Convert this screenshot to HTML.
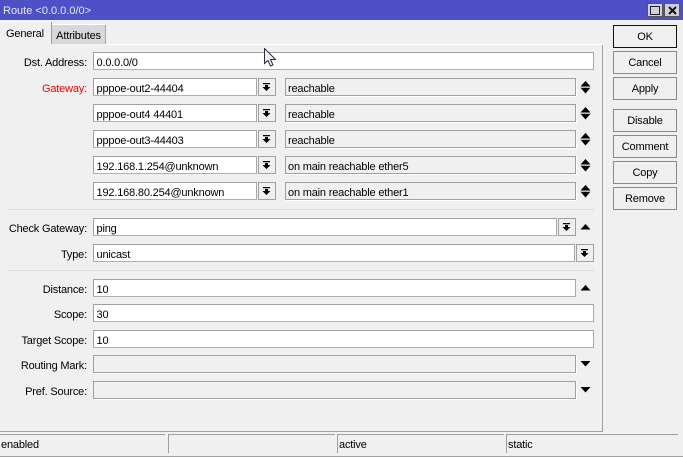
<!DOCTYPE html>
<html>
<head>
<meta charset="utf-8">
<style>
html,body{margin:0;padding:0;}
body{width:683px;height:457px;position:relative;overflow:hidden;background:#f0f0f0;font-family:"Liberation Sans",sans-serif;font-size:11px;letter-spacing:-.18px;color:#000;}
div,svg{position:absolute;box-sizing:border-box;}
.f{height:18px;background:#fff;border:1px solid #a0a0a0;border-right-color:#a8a8a8;border-bottom-color:#b0b0b0;line-height:21px;padding-left:2.5px;white-space:pre;}
.r{height:18px;background:#f0f0f0;border:1px solid #a0a0a0;box-shadow:1px 1px 0 #fff;line-height:21px;padding-left:2px;white-space:pre;}
.l{width:87px;left:0;text-align:right;height:18px;line-height:22px;white-space:pre;}
.b{left:613px;width:64px;height:23px;border:1px solid #8a8a8a;text-align:center;line-height:23px;background:#f0f0f0;}
.d{width:18px;height:18px;background:#f0f0f0;border:1px solid #a0a0a0;}
.sep{height:1px;background:#dcdcdc;left:8px;width:586px;}
.s{top:434px;height:19px;border-top:1px solid #a0a0a0;border-left:1px solid #a0a0a0;line-height:20px;padding-left:1px;}
</style>
</head>
<body>
<svg width="0" height="0" style="left:0;top:0"><defs>
<symbol id="dd" viewBox="0 0 18 18"><path d="M5 5h7v1.200H5zM7 7h3v2h2.500l-4 4-4-4H7z" fill="#000"/></symbol>
<symbol id="ud" viewBox="0 0 12 14"><path d="M5.500 0l5 5.500H.5zM.5 6.700h10l-5 5.800z" fill="#000"/></symbol>
<symbol id="u" viewBox="0 0 12 8"><path d="M5.500 0l5 5.500H.5z" fill="#000"/></symbol>
<symbol id="dn" viewBox="0 0 12 8"><path d="M.5 0h10l-5 5.500z" fill="#000"/></symbol>
</defs></svg>

<!-- title bar -->
<div style="left:0;top:0;width:683px;height:20px;background:#4e50c8;"></div>
<div style="left:3px;top:3px;height:17px;line-height:17px;color:#e8e8f8;letter-spacing:0;">Route &lt;0.0.0.0/0&gt;</div>
<div style="left:647px;top:3px;width:16px;height:14px;background:#d0d0d8;border:1px solid #555;"></div>
<div style="left:650px;top:6px;width:10px;height:9px;border:1px solid #222;"></div>
<div style="left:664px;top:3px;width:16px;height:14px;background:#d0d0d8;border:1px solid #555;"></div>
<svg style="left:668px;top:6px" width="9" height="9" viewBox="0 0 9 9"><path d="M1 1l7 7M8 1L1 8" stroke="#111" stroke-width="2"/></svg>

<!-- tabs -->
<div style="left:105px;top:44px;width:498px;height:1px;background:#fff;"></div>
<div style="left:0;top:44px;width:52px;height:1px;background:#f0f0f0;"></div>
<div style="left:51px;top:22px;width:1px;height:22px;background:#9a9a9a;"></div>
<div style="left:0;top:21px;width:51px;height:1px;background:#fff;"></div>
<div style="left:6px;top:25px;height:18px;line-height:18px;">General</div>
<div style="left:52px;top:24px;width:54px;height:20px;background:#d8d8d8;border-top:1px solid #fff;border-right:1px solid #a8a8a8;text-align:center;line-height:22px;">Attributes</div>

<!-- panel borders -->
<div style="left:602px;top:45px;width:1px;height:387px;background:#a0a0a0;"></div>
<div style="left:0;top:431px;width:603px;height:1px;background:#a0a0a0;"></div>

<!-- fields -->
<div class="l" style="top:52px">Dst. Address:</div>
<div class="f" style="left:93px;top:52px;width:501px">0.0.0.0/0</div>

<div class="l" style="top:78px;color:#f00">Gateway:</div>
<div class="f" style="left:93px;top:78px;width:164px">pppoe-out2-44404</div>
<div class="d" style="left:258px;top:78px"><svg style="left:-1px;top:-1px" width="18" height="18"><use href="#dd"/></svg></div>
<div class="r" style="left:285px;top:78px;width:291px">reachable</div>
<svg style="left:580px;top:81px" width="12" height="14"><use href="#ud"/></svg>

<div class="f" style="left:93px;top:104px;width:164px">pppoe-out4 44401</div>
<div class="d" style="left:258px;top:104px"><svg style="left:-1px;top:-1px" width="18" height="18"><use href="#dd"/></svg></div>
<div class="r" style="left:285px;top:104px;width:291px">reachable</div>
<svg style="left:580px;top:107px" width="12" height="14"><use href="#ud"/></svg>

<div class="f" style="left:93px;top:130px;width:164px">pppoe-out3-44403</div>
<div class="d" style="left:258px;top:130px"><svg style="left:-1px;top:-1px" width="18" height="18"><use href="#dd"/></svg></div>
<div class="r" style="left:285px;top:130px;width:291px">reachable</div>
<svg style="left:580px;top:133px" width="12" height="14"><use href="#ud"/></svg>

<div class="f" style="left:93px;top:156px;width:164px">192.168.1.254@unknown</div>
<div class="d" style="left:258px;top:156px"><svg style="left:-1px;top:-1px" width="18" height="18"><use href="#dd"/></svg></div>
<div class="r" style="left:285px;top:156px;width:291px">on main reachable ether5</div>
<svg style="left:580px;top:159px" width="12" height="14"><use href="#ud"/></svg>

<div class="f" style="left:93px;top:182px;width:164px">192.168.80.254@unknown</div>
<div class="d" style="left:258px;top:182px"><svg style="left:-1px;top:-1px" width="18" height="18"><use href="#dd"/></svg></div>
<div class="r" style="left:285px;top:182px;width:291px">on main reachable ether1</div>
<svg style="left:580px;top:185px" width="12" height="14"><use href="#ud"/></svg>

<div class="sep" style="top:209px"></div>

<div class="l" style="top:218px">Check Gateway:</div>
<div class="f" style="left:93px;top:218px;width:464px">ping</div>
<div class="d" style="left:558px;top:218px"><svg style="left:-1px;top:-1px" width="18" height="18"><use href="#dd"/></svg></div>
<svg style="left:580px;top:224px" width="12" height="8"><use href="#u"/></svg>

<div class="l" style="top:244px">Type:</div>
<div class="f" style="left:93px;top:244px;width:482px">unicast</div>
<div class="d" style="left:576px;top:244px"><svg style="left:-1px;top:-1px" width="18" height="18"><use href="#dd"/></svg></div>

<div class="sep" style="top:270px"></div>

<div class="l" style="top:279px">Distance:</div>
<div class="f" style="left:93px;top:279px;width:483px">10</div>
<svg style="left:580px;top:285px" width="12" height="8"><use href="#u"/></svg>

<div class="l" style="top:304px">Scope:</div>
<div class="f" style="left:93px;top:304px;width:501px">30</div>

<div class="l" style="top:330px">Target Scope:</div>
<div class="f" style="left:93px;top:330px;width:501px">10</div>

<div class="l" style="top:355px">Routing Mark:</div>
<div class="r" style="left:93px;top:355px;width:483px"></div>
<svg style="left:580px;top:361px" width="12" height="8"><use href="#dn"/></svg>

<div class="l" style="top:381px">Pref. Source:</div>
<div class="r" style="left:93px;top:381px;width:483px"></div>
<svg style="left:580px;top:387px" width="12" height="8"><use href="#dn"/></svg>

<!-- buttons -->
<div class="b" style="top:25px;border-color:#111">OK</div>
<div class="b" style="top:51px">Cancel</div>
<div class="b" style="top:77px">Apply</div>
<div class="b" style="top:109px">Disable</div>
<div class="b" style="top:135px">Comment</div>
<div class="b" style="top:161px">Copy</div>
<div class="b" style="top:187px">Remove</div>

<!-- status bar -->
<div style="left:0;top:434px;width:165px;height:1px;background:#a0a0a0;"></div>
<div style="left:1px;top:435px;height:19px;line-height:20px;">enabled</div>
<div class="s" style="left:168px;width:167px"></div>
<div class="s" style="left:337px;width:167px">active</div>
<div class="s" style="left:506px;width:172px">static</div>
<div style="left:0;top:456px;width:683px;height:1px;background:#a0a0a0;"></div>

<!-- cursor -->
<svg style="left:264px;top:48px" width="13" height="19" viewBox="0 0 13 19"><path d="M.5.5v15l3.500-3 2.500 5.500 2.500-1-2.500-5.500h5z" fill="#f4f4f4" stroke="#2a2a40" stroke-width="1"/></svg>
</body>
</html>
